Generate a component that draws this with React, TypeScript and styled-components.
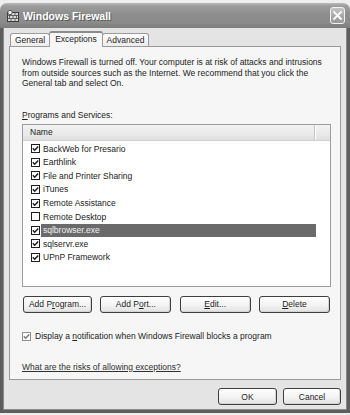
import React from "react";
import styled, { createGlobalStyle } from "styled-components";

const GlobalStyle = createGlobalStyle`
  html, body { margin: 0; padding: 0; background: #eeeeee; }
  body { font-family: "Liberation Sans", Arial, sans-serif; }
  #root { width: 350px; height: 415px; overflow: hidden; }
`;

const Window = styled.div`
  box-sizing: border-box;
  width: 350px;
  height: 410px;
  margin-top: 3px;
  display: flex;
  flex-direction: column;
`;

const TitleBar = styled.div`
  box-sizing: border-box;
  height: 25px;
  flex: none;
  display: flex;
  align-items: center;
  padding: 0 5px 0 7px;
  border-radius: 7px 7px 0 0;
  background: linear-gradient(
    to bottom,
    #b9b9b9 0%,
    #9c9c9c 12%,
    #8e8e8e 45%,
    #8a8a8a 80%,
    #7c7c7c 100%
  );
`;

const TitleText = styled.span`
  margin-left: 4px;
  color: #ffffff;
  font-family: "Liberation Sans", Arial, sans-serif;
  font-weight: bold;
  font-size: 10.5px;
  text-shadow: 1px 1px 0 #5a5a5a;
  white-space: nowrap;
`;

const CloseButton = styled.div`
  box-sizing: border-box;
  margin-left: auto;
  width: 15px;
  height: 17px;
  border: 1px solid #f2f2f2;
  border-radius: 3px;
  background: linear-gradient(to bottom, #c4c4c4, #a6a6a6 60%, #9a9a9a);
  display: flex;
  align-items: center;
  justify-content: center;
`;

const Body = styled.div`
  box-sizing: border-box;
  flex: 1;
  display: flex;
  flex-direction: column;
  padding: 3px 6px 5px 6px;
  background: #e4e4e4;
  border: 3px solid #5e5e5e;
  border-top: none;
  box-shadow: inset 1px 0 0 #8a8a8a, inset -1px 0 0 #8a8a8a, inset 0 -1px 0 #8a8a8a;
`;

const TabRow = styled.div`
  display: flex;
  align-items: flex-end;
  height: 15px;
  padding-left: 1px;
  position: relative;
  z-index: 1;
`;

const Tab = styled.div<{ $selected?: boolean; $w: number }>`
  box-sizing: border-box;
  width: ${(p) => p.$w}px;
  height: ${(p) => (p.$selected ? 16 : 13)}px;
  margin-bottom: ${(p) => (p.$selected ? -1 : 0)}px;
  margin-left: -1px;
  position: relative;
  z-index: ${(p) => (p.$selected ? 2 : 1)};
  display: flex;
  align-items: center;
  justify-content: center;
  border: 1px solid #9a9a9a;
  border-bottom: none;
  border-top: ${(p) => (p.$selected ? "2px solid #8c8c8c" : "1px solid #9a9a9a")};
  border-radius: 3px 3px 0 0;
  background: ${(p) =>
    p.$selected ? "#f6f6f6" : "linear-gradient(to bottom, #ffffff, #ececec)"};
  color: #1e1e1e;
  font-size: 8.5px;
  white-space: nowrap;
  padding-bottom: ${(p) => (p.$selected ? 2 : 0)}px;
  &:first-child { margin-left: 0; }
`;

const Panel = styled.div`
  box-sizing: border-box;
  height: 334px;
  flex: none;
  display: flex;
  flex-direction: column;
  padding: 10px 9px 0 12px;
  border: 1px solid #9a9a9a;
  background: #f6f6f6;
  color: #222222;
  font-size: 8.5px;
  line-height: 10.5px;
`;

const Paragraph = styled.p`
  margin: 0;
  white-space: nowrap;
`;

const SectionLabel = styled.div`
  margin-top: 21.5px;
`;

const U = styled.span`
  text-decoration: underline;
`;

const ListBox = styled.div`
  box-sizing: border-box;
  margin-top: 3.5px;
  height: 163px;
  border: 1px solid #9c9c9c;
  background: #ffffff;
  overflow: hidden;
`;

const ListHeader = styled.div`
  box-sizing: border-box;
  height: 16px;
  display: flex;
  background: linear-gradient(to bottom, #f2f2f2, #e8e8e8 70%, #dedede);
  border-bottom: 1px solid #d2d2d2;
`;

const HeaderCell = styled.div`
  box-sizing: border-box;
  width: 292px;
  padding-left: 7px;
  display: flex;
  align-items: center;
  border-right: 1px solid #c4c4c4;
  box-shadow: 1px 0 0 #ffffff;
  color: #222;
`;

const Rows = styled.div`
  padding-top: 1px;
`;

const Row = styled.div`
  height: 13.6px;
  display: flex;
  align-items: center;
  padding-left: 8px;
`;

const Box = styled.span<{ $light?: boolean }>`
  box-sizing: border-box;
  flex: none;
  width: 9px;
  height: 9px;
  border: 1px solid ${(p) => (p.$light ? "#8e8e8e" : "#1e1e1e")};
  background: #ffffff;
  display: flex;
  align-items: center;
  justify-content: center;
`;

const RowLabel = styled.span<{ $selected?: boolean }>`
  box-sizing: border-box;
  width: 275px;
  height: 100%;
  margin-left: 1px;
  padding-left: 2px;
  display: flex;
  align-items: center;
  white-space: nowrap;
  background: ${(p) => (p.$selected ? "#6a6a6a" : "transparent")};
  color: ${(p) => (p.$selected ? "#f2f2f2" : "#222222")};
`;

const ButtonRow = styled.div`
  margin-top: 9px;
  display: flex;
  justify-content: space-between;
  padding: 0 1px 0 1px;
`;

const Button = styled.div<{ $w: number }>`
  box-sizing: border-box;
  width: ${(p) => p.$w}px;
  height: 17px;
  display: flex;
  align-items: center;
  justify-content: center;
  border: 1px solid #3e3e3e;
  border-radius: 3px;
  background: linear-gradient(to bottom, #ffffff, #f3f3f3 55%, #e2e2e2);
  box-shadow: inset -1px -1px 0 #d4d4d4;
  color: #1e1e1e;
  font-size: 8.5px;
  white-space: nowrap;
`;

const NotifyRow = styled.div`
  margin-top: 17px;
  height: 12px;
  display: flex;
  align-items: center;
  gap: 4px;
  white-space: nowrap;
`;

const Link = styled.span`
  margin-top: 19px;
  height: 12px;
  display: flex;
  align-items: center;
  color: #2e2e2e;
  text-decoration: underline;
  white-space: nowrap;
  cursor: pointer;
`;

const Footer = styled.div`
  margin-top: 8px;
  display: flex;
  justify-content: flex-end;
  gap: 6px;
`;

const Check = ({ color = "#1e1e1e" }: { color?: string }) => (
  <svg width="7" height="7" viewBox="0 0 7 7">
    <path d="M0.8 3.3 L2.7 5.2 L6.2 1.4" fill="none" stroke={color} strokeWidth="1.5" />
  </svg>
);

const FirewallIcon = () => (
  <svg width="12" height="12" viewBox="0 0 12 12">
    <rect x="0.5" y="2.5" width="11" height="9" fill="#d8d8d8" stroke="#3a3a3a" strokeWidth="1" />
    <path
      d="M0.5 5.5 H11.5 M0.5 8.5 H11.5 M4 2.5 V5.5 M8 2.5 V5.5 M2.5 5.5 V8.5 M6 5.5 V8.5 M9.5 5.5 V8.5 M4 8.5 V11.5 M8 8.5 V11.5"
      stroke="#4a4a4a"
      strokeWidth="0.8"
    />
    <circle cx="3" cy="2.5" r="2.2" fill="#f2f2f2" stroke="#3a3a3a" strokeWidth="0.8" />
  </svg>
);

const CloseX = () => (
  <svg width="9" height="9" viewBox="0 0 9 9">
    <path d="M1 1 L8 8 M8 1 L1 8" stroke="#ffffff" strokeWidth="1.8" strokeLinecap="square" />
  </svg>
);

const items = [
  { name: "BackWeb for Presario", checked: true },
  { name: "Earthlink", checked: true },
  { name: "File and Printer Sharing", checked: true },
  { name: "iTunes", checked: true },
  { name: "Remote Assistance", checked: true },
  { name: "Remote Desktop", checked: false },
  { name: "sqlbrowser.exe", checked: true, selected: true },
  { name: "sqlservr.exe", checked: true },
  { name: "UPnP Framework", checked: true },
];

export default function App() {
  return (
    <>
      <GlobalStyle />
      <Window>
        <TitleBar>
          <FirewallIcon />
          <TitleText>Windows Firewall</TitleText>
          <CloseButton>
            <CloseX />
          </CloseButton>
        </TitleBar>
        <Body>
          <TabRow>
            <Tab $w={40}>General</Tab>
            <Tab $w={54} $selected>
              Exceptions
            </Tab>
            <Tab $w={47}>Advanced</Tab>
          </TabRow>
          <Panel>
            <Paragraph>
              Windows Firewall is turned off. Your computer is at risk of attacks and intrusions
              <br />
              from outside sources such as the Internet. We recommend that you click the
              <br />
              General tab and select On.
            </Paragraph>
            <SectionLabel>
              <U>P</U>rograms and Services:
            </SectionLabel>
            <ListBox>
              <ListHeader>
                <HeaderCell>Name</HeaderCell>
              </ListHeader>
              <Rows>
                {items.map((it) => (
                  <Row key={it.name}>
                    <Box>{it.checked && <Check />}</Box>
                    <RowLabel $selected={it.selected}>{it.name}</RowLabel>
                  </Row>
                ))}
              </Rows>
            </ListBox>
            <ButtonRow>
              <Button $w={69}>
                Add P<U>r</U>ogram...
              </Button>
              <Button $w={71}>
                Add P<U>o</U>rt...
              </Button>
              <Button $w={71}>
                <U>E</U>dit...
              </Button>
              <Button $w={71}>
                <U>D</U>elete
              </Button>
            </ButtonRow>
            <NotifyRow>
              <Box $light>
                <Check color="#7a7a7a" />
              </Box>
              <span>
                Display a <U>n</U>otification when Windows Firewall blocks a program
              </span>
            </NotifyRow>
            <Link>What are the risks of allowing exceptions?</Link>
          </Panel>
          <Footer>
            <Button $w={59}>OK</Button>
            <Button $w={58}>Cancel</Button>
          </Footer>
        </Body>
      </Window>
    </>
  );
}
